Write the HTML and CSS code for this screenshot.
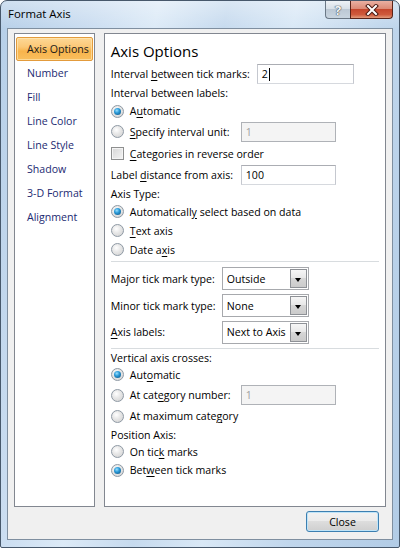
FILE: index.html
```html
<!DOCTYPE html>
<html>
<head>
<meta charset="utf-8">
<link rel="stylesheet" href="styles.css">
</head>
<body>
<div class="window">
  <div class="titlebar">
    <span class="title">Format Axis</span>
    <div class="caption">
      <div class="cbtn help"><span>?</span></div>
      <div class="cbtn closex">
        <svg width="14" height="12" viewBox="0 0 14 12">
          <path d="M3 2 L11 10 M11 2 L3 10" stroke="#4a1a12" stroke-width="4" stroke-linecap="square"/>
          <path d="M3 2 L11 10 M11 2 L3 10" stroke="#ffffff" stroke-width="2" stroke-linecap="square"/>
        </svg>
      </div>
    </div>
  </div>
  <div class="client">
    <div class="main">
      <ul class="nav">
        <li class="sel">Axis Options</li>
        <li>Number</li>
        <li>Fill</li>
        <li>Line Color</li>
        <li>Line Style</li>
        <li>Shadow</li>
        <li>3-D Format</li>
        <li>Alignment</li>
      </ul>
      <div class="panel">
        <h1 class="heading">Axis Options</h1>
        <div class="r h20"><span class="lbl w146">Interval <u>b</u>etween tick marks:</span><span class="tb w97">2<span class="caret"></span></span></div>
        <div class="r h18"><span>Interval between labels:</span></div>
        <div class="r h18"><span class="radio on"></span><span>A<u>u</u>tomatic</span></div>
        <div class="r h23"><span class="radio"></span><span class="lbl w111"><u>S</u>pecify interval unit:</span><span class="tb w95 dis">1</span></div>
        <div class="r h21"><span class="check"></span><span><u>C</u>ategories in reverse order</span></div>
        <div class="r h22"><span class="lbl w130">Label <u>d</u>istance from axis:</span><span class="tb w95">100</span></div>
        <div class="r h16"><span>Axis Type:</span></div>
        <div class="r h19"><span class="radio on"></span><span>Automaticall<u>y</u> select based on data</span></div>
        <div class="r h19"><span class="radio"></span><span><u>T</u>ext axis</span></div>
        <div class="r h19"><span class="radio"></span><span>Date a<u>x</u>is</span></div>
        <div class="sep sep1"></div>
        <div class="r h27"><span class="lbl w111">Major tick mark type:</span><span class="sel-box"><span class="sel-val">Outside</span><span class="arrow"></span></span></div>
        <div class="r h27"><span class="lbl w111">Minor tick mark type:</span><span class="sel-box"><span class="sel-val">None</span><span class="arrow"></span></span></div>
        <div class="r h26"><span class="lbl w111"><u>A</u>xis labels:</span><span class="sel-box"><span class="sel-val">Next to Axis</span><span class="arrow"></span></span></div>
        <div class="sep sep2"></div>
        <div class="r h14"><span>Vertical axis crosses:</span></div>
        <div class="r h19"><span class="radio on"></span><span>Aut<u>o</u>matic</span></div>
        <div class="r h22"><span class="radio"></span><span class="lbl w111">At cat<u>e</u>gory number:</span><span class="tb w95 dis">1</span></div>
        <div class="r h20"><span class="radio"></span><span>At maximum cate<u>g</u>ory</span></div>
        <div class="r h17"><span>Position Axis:</span></div>
        <div class="r h17"><span class="radio"></span><span>On tic<u>k</u> marks</span></div>
        <div class="r h20"><span class="radio on"></span><span>Bet<u>w</u>een tick marks</span></div>
      </div>
    </div>
    <div class="footer"><button class="btn">Close</button></div>
  </div>
</div>
</body>
</html>
```
FILE: styles.css
```css
* { box-sizing: border-box; }
html, body { margin: 0; padding: 0; }
body {
  width: 400px;
  height: 548px;
  overflow: hidden;
  font-family: "Open Sans", "Noto Sans", "DejaVu Sans", sans-serif;
  font-size: 10.6px;
  color: #000;
  background: #fff;
}
u { text-decoration: underline; text-underline-offset: 2px; }

.window {
  width: 400px;
  height: 548px;
  border: 1px solid #47586b;
  border-radius: 7px 7px 2px 2px;
  padding: 0 6px 7px 6px;
  display: flex;
  flex-direction: column;
  background:
    linear-gradient(180deg, rgba(255,255,255,0.35) 0, rgba(255,255,255,0) 28px),
    linear-gradient(100deg, #b6cfe8 0%, #c9dcf0 18%, #dceaf7 32%, #c6daee 46%, #d9e8f6 60%, #c0d6ec 78%, #b2cce6 100%);
}
.titlebar {
  height: 27px;
  flex: none;
  display: flex;
  justify-content: space-between;
  align-items: flex-start;
}
.title {
  padding: 5px 0 0 1px;
  font-size: 11.4px;
  line-height: 16px;
  color: #000;
}
.caption { display: flex; margin-right: 0; }
.cbtn { height: 18px; display: flex; align-items: center; justify-content: center; }
.help {
  width: 25px;
  border: 1px solid #6b7886;
  border-top: none;
  border-right: none;
  border-radius: 0 0 0 4px;
  background: linear-gradient(#eef2f6 0, #d8e0e8 45%, #bcc8d4 50%, #c9d5e0 100%);
}
.help span {
  font-size: 13px;
  font-weight: bold;
  color: #f4f6f8;
  line-height: 16px;
  text-shadow: 0 0 1px #4d5660, 0 0 1px #4d5660, 0 0 1px #4d5660;
}
.closex {
  width: 43px;
  border: 1px solid #5a2318;
  border-top: none;
  border-radius: 0 0 4px 0;
  background: linear-gradient(#eab0a2 0, #dc8a76 45%, #c5472d 50%, #cf5a3c 80%, #e29b7c 100%);
}

.client {
  flex: 1;
  border: 1px solid #7f8fa0;
  background: #f0f0f0;
  padding: 4px 6px 0 6px;
  display: flex;
  flex-direction: column;
}
.main { height: 474px; flex: none; display: flex; gap: 9px; }
.nav {
  width: 81px;
  border: 1px solid #828790;
  background: #fff;
  margin: 0;
  padding: 3px 1px;
  list-style: none;
}
.nav li {
  height: 24px;
  line-height: 22px;
  padding-left: 10px;
  color: #1c2a72;
  border: 1px solid transparent;
  border-radius: 2px;
  white-space: nowrap;
}
.nav li.sel {
  background: linear-gradient(#fdd896 0, #fbc877 40%, #f8b44c 60%, #f9bf5e 100%);
  border-color: #e39b3c;
  box-shadow: inset 0 0 0 1px rgba(255, 236, 190, 0.6);
  color: #1a1a1a;
}
.panel {
  width: 283px;
  border: 1px solid #828790;
  background: #fff;
  padding: 4px 6px 0 6px;
  display: flex;
  flex-direction: column;
}
.heading {
  margin: 0;
  height: 26px;
  line-height: 26px;
  font-size: 15px;
  font-weight: normal;
}
.r { display: flex; align-items: center; flex: none; white-space: nowrap; }
.h14 { height: 14px; }
.h16 { height: 16px; }
.h17 { height: 17px; }
.h18 { height: 18px; }
.h19 { height: 19px; }
.h20 { height: 20px; }
.h21 { height: 21px; }
.h22 { height: 22px; }
.h23 { height: 23px; }
.h26 { height: 26px; }
.h27 { height: 27px; }
.lbl { flex: none; }
.w111 { width: 111px; }
.w130 { width: 130px; }
.w146 { width: 146px; }

.radio {
  flex: none;
  position: relative;
  width: 13px;
  height: 13px;
  margin-right: 6px;
  border-radius: 50%;
  border: 1px solid #8e99a4;
  background: radial-gradient(circle at 40% 35%, #ffffff 0, #e6e6e6 45%, #cfcfcf 100%);
}
.radio.on::after {
  content: "";
  position: absolute;
  left: 2px;
  top: 2px;
  width: 7px;
  height: 7px;
  border-radius: 50%;
  background: radial-gradient(circle at 40% 35%, #9be0ff 0, #2a9ad8 40%, #0c4a78 100%);
}
.check {
  flex: none;
  width: 13px;
  height: 13px;
  margin-right: 6px;
  border: 1px solid #8e8f8f;
  background: linear-gradient(135deg, #d6d6d6 0, #f4f4f4 100%);
  box-shadow: inset 0 0 0 1px #f4f4f4;
}
.tb {
  flex: none;
  height: 20px;
  border: 1px solid #abadb3;
  border-left-color: #c5c8cf;
  border-bottom-color: #d6d9de;
  border-right-color: #c5c8cf;
  background: #fff;
  padding-left: 4px;
  display: flex;
  align-items: center;
}
.w95 { width: 95px; }
.w97 { width: 97px; }
.tb.dis { background: #f4f4f4; border-color: #afb2b7; color: #a0a0a0; }
.caret { display: inline-block; width: 1px; height: 13px; background: #000; margin-left: 1px; }

.sep { flex: none; height: 1px; background: #d8dcdf; margin-right: 0; }
.sep1 { margin-top: 2px; margin-bottom: 3px; }
.sep2 { margin-top: 3px; margin-bottom: 2px; }

.sel-box {
  flex: none;
  width: 87px;
  height: 23px;
  border: 1px solid #a7a9ad;
  background: #fff;
  display: flex;
  align-items: stretch;
  padding: 1px;
}
.sel-val { flex: 1; display: flex; align-items: center; padding-left: 3px; }
.arrow {
  flex: none;
  width: 17px;
  border: 1px solid #8e9196;
  background: linear-gradient(#f6f6f6 0, #e8e8e8 45%, #d6d6d6 50%, #cbcbcb 100%);
  position: relative;
}
.arrow::after {
  content: "";
  position: absolute;
  left: 4px;
  top: 8px;
  border-left: 3.5px solid transparent;
  border-right: 3.5px solid transparent;
  border-top: 4px solid #000;
}

.footer { display: flex; justify-content: flex-end; padding: 4px 7px 0 0; }
.btn {
  width: 73px;
  height: 21px;
  border: 1px solid #3c7fb1;
  border-radius: 3px;
  background: linear-gradient(#f2f2f2 0, #ebebeb 45%, #dddddd 50%, #cfcfcf 100%);
  box-shadow: inset 0 0 0 1px #bfe4f8;
  font-family: inherit;
  font-size: 10.6px;
  color: #000;
  padding: 0;
}
```
